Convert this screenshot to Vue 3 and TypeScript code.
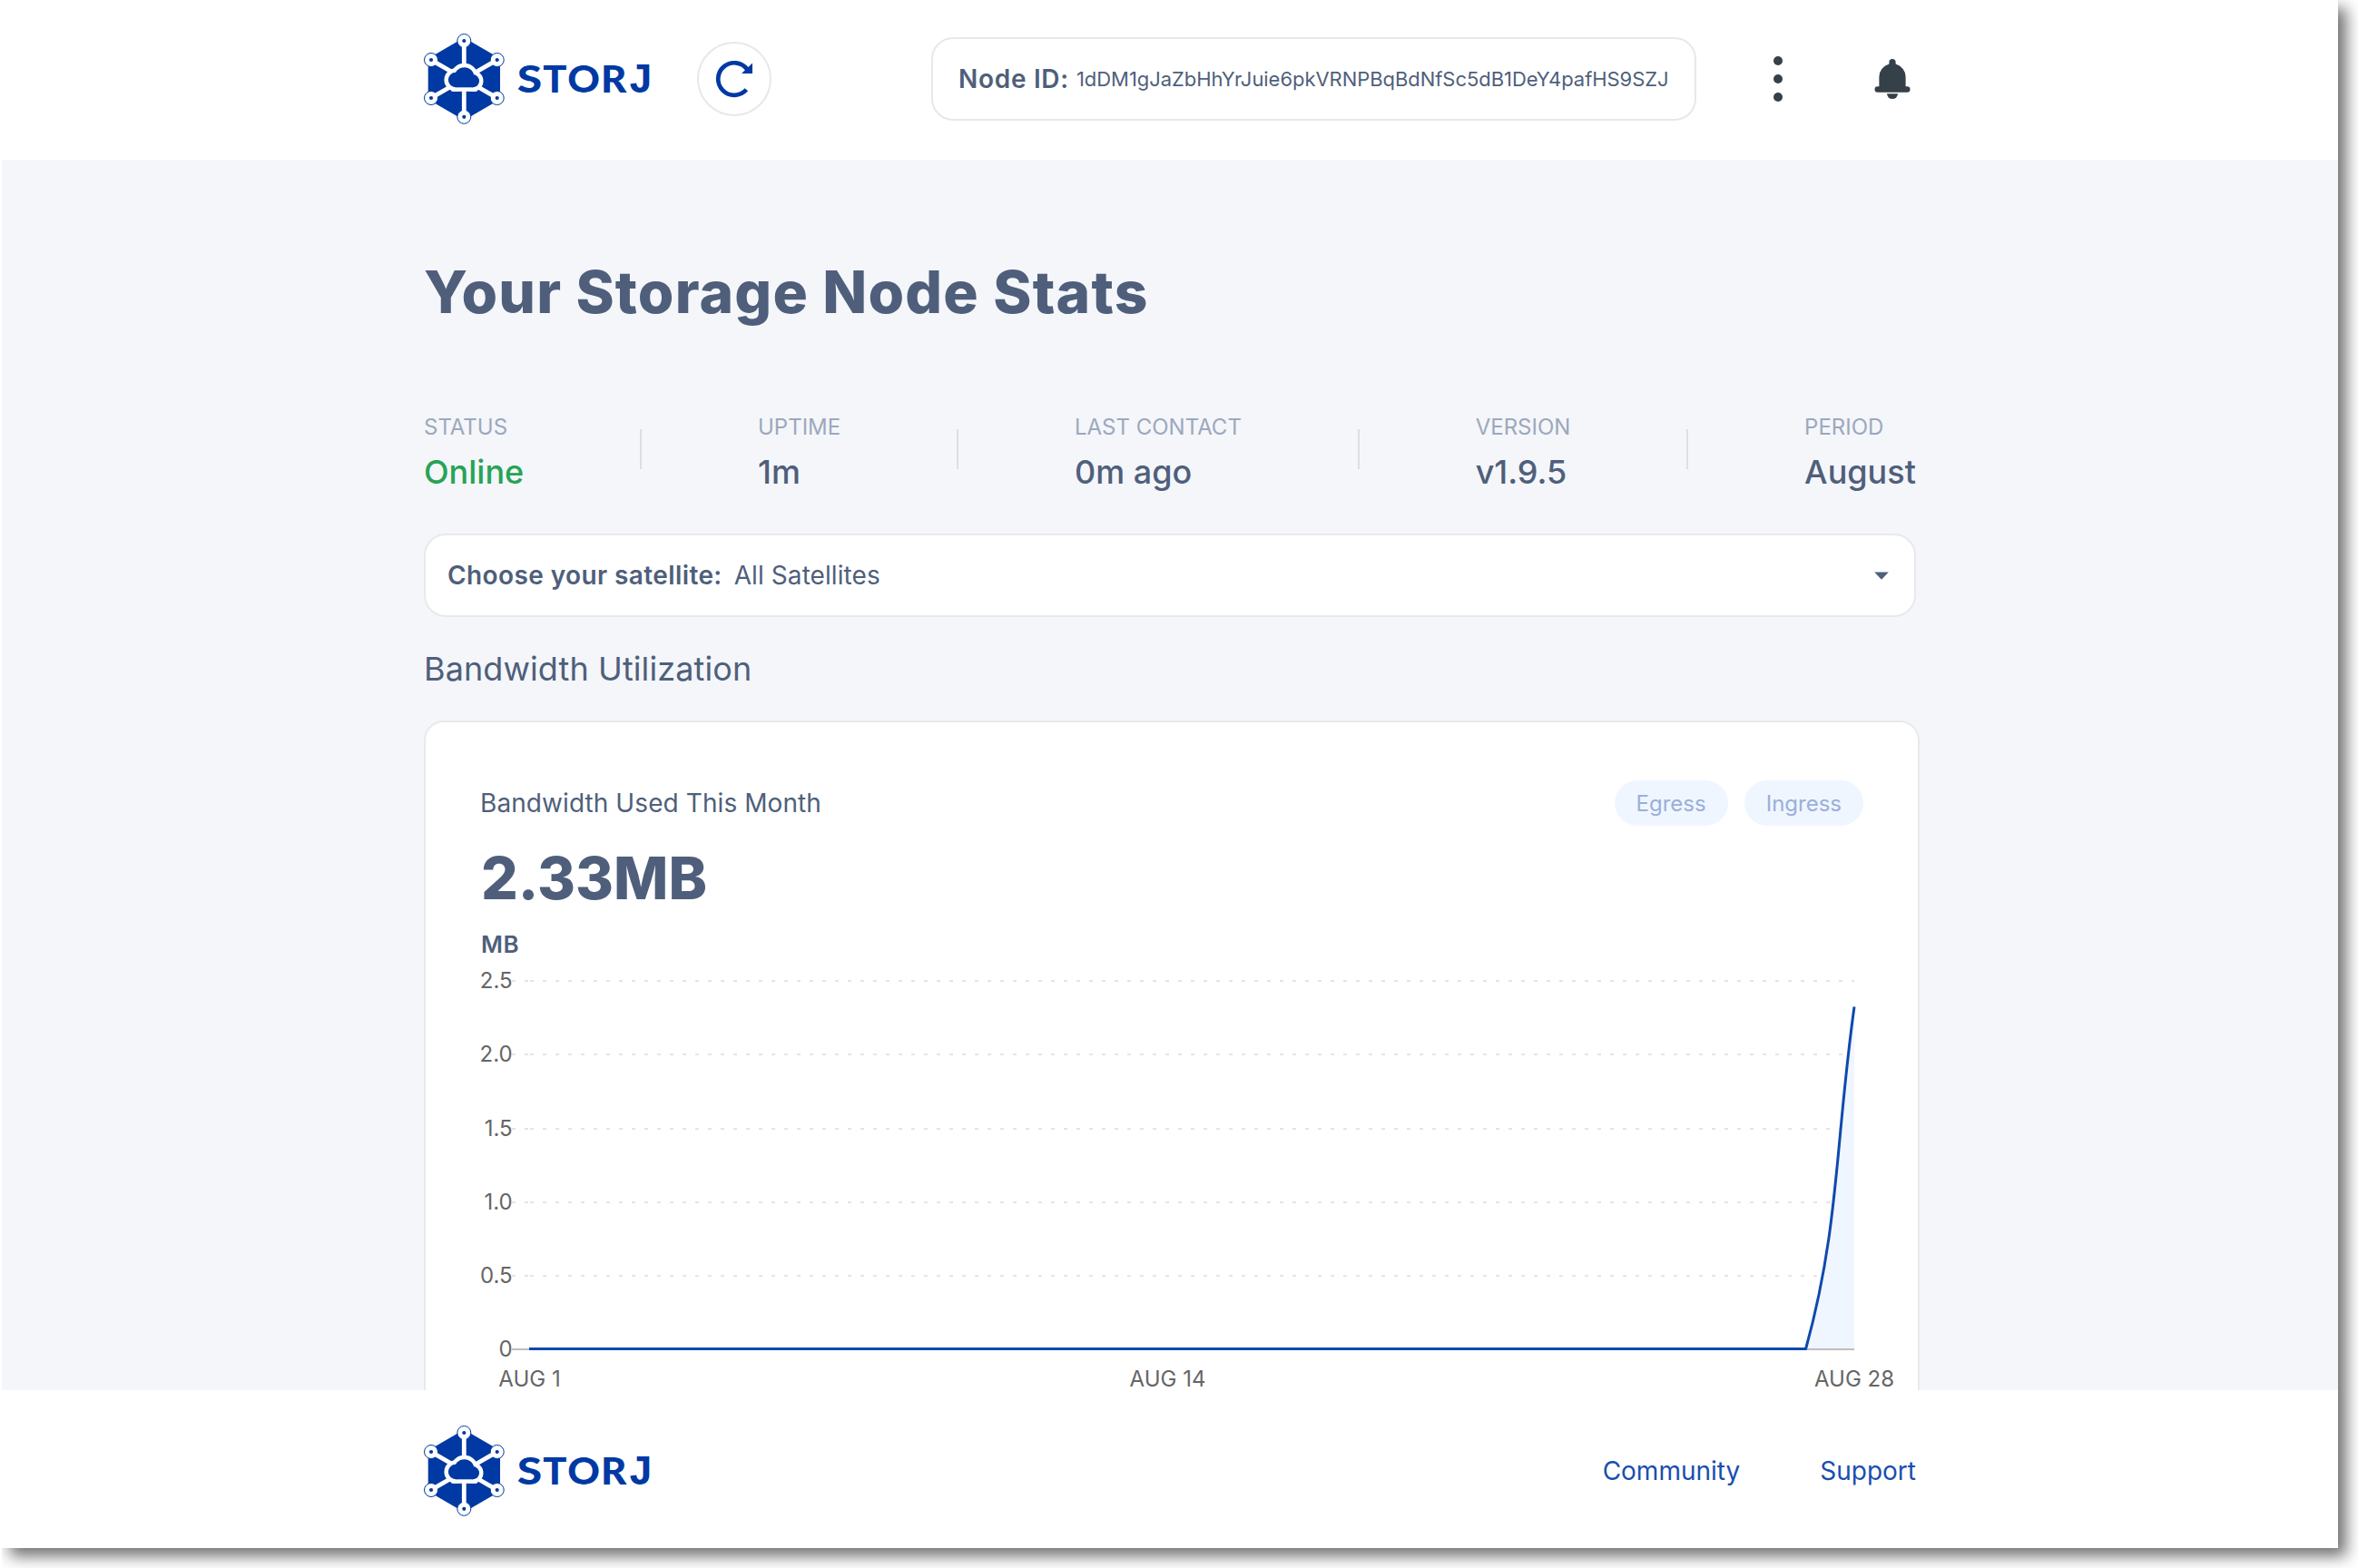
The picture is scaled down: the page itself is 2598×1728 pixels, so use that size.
<script setup lang="ts">
interface Stat { label: string; value: string; online?: boolean }
interface Glyph { char: string; x: number; length: number; family: string; size: number }

const nodeId = '1dDM1gJaZbHhYrJuie6pkVRNPBqBdNfSc5dB1DeY4pafHS9SZJ'

const stats: Stat[] = [
  { label: 'STATUS', value: 'Online', online: true },
  { label: 'UPTIME', value: '1m' },
  { label: 'LAST CONTACT', value: '0m ago' },
  { label: 'VERSION', value: 'v1.9.5' },
  { label: 'PERIOD', value: 'August' },
]

const wordmark: Glyph[] = [
  { char: 'S', x: 102.8, length: 27.4, family: 'Lato', size: 42.5 },
  { char: 'T', x: 131.2, length: 26.2, family: 'Lato', size: 42.5 },
  { char: 'O', x: 158.3, length: 35.7, family: 'Lato', size: 42.5 },
  { char: 'R', x: 195, length: 28.4, family: 'Lato', size: 42.5 },
  { char: 'J', x: 225, length: 28, family: 'Liberation Mono', size: 46.5 },
]

const logoNodes = [
  [44.3, 8], [80.7, 29], [80.7, 71], [44.3, 91.8], [8, 71], [8, 29],
]

const gridLines = [
  { label: '2.5', y: 25 },
  { label: '2.0', y: 106 },
  { label: '1.5', y: 188 },
  { label: '1.0', y: 269 },
  { label: '0.5', y: 350 },
  { label: '0', y: 431 },
]

const dates = [
  { label: 'AUG 1', x: 54.5 },
  { label: 'AUG 14', x: 757.5 },
  { label: 'AUG 28', x: 1514 },
]
</script>

<template>
  <div class="page">
    <svg class="defs" width="0" height="0" aria-hidden="true">
      <symbol id="storj-mark" viewBox="0 0 90 100">
        <path d="M44.3 4.5 84 27.4V72.6L44.3 95.5 4.7 72.6V27.4Z" fill="#0039a3" />
        <g v-for="(n, i) in logoNodes" :key="i">
          <circle :cx="n[0]" :cy="n[1]" r="7.5" fill="#fff" stroke="#0039a3" stroke-width="1" />
          <circle :cx="n[0]" :cy="n[1]" r="2.1" fill="#0039a3" />
        </g>
        <g stroke="#fff" stroke-width="4.8">
          <line x1="44.3" y1="12" x2="44.3" y2="40" />
          <line x1="44.3" y1="88" x2="44.3" y2="60" />
          <line x1="12" y1="31.3" x2="40" y2="47.5" />
          <line x1="76.6" y1="31.3" x2="48.6" y2="47.5" />
          <line x1="12" y1="68.7" x2="40" y2="52.5" />
          <line x1="76.6" y1="68.7" x2="48.6" y2="52.5" />
        </g>
        <g fill="#fff" stroke="#fff" stroke-width="9">
          <circle cx="35.2" cy="51" r="8.3" />
          <circle cx="44.6" cy="48" r="10.8" />
          <circle cx="53.9" cy="52.2" r="7.1" />
          <rect x="35" y="50" width="19" height="9.3" />
        </g>
        <g fill="#0039a3">
          <circle cx="35.2" cy="51" r="8.3" />
          <circle cx="44.6" cy="48" r="10.8" />
          <circle cx="53.9" cy="52.2" r="7.1" />
          <rect x="35" y="50" width="19" height="9.3" />
        </g>
      </symbol>
    </svg>

    <div class="window">
      <header class="header">
        <div class="container header-row">
          <svg class="logo" width="254" height="100" viewBox="0 0 254 100">
            <use href="#storj-mark" width="90" height="100" />
            <text
              v-for="g in wordmark"
              :key="g.char"
              :x="g.x"
              y="65"
              :font-family="`'${g.family}', sans-serif`"
              :font-size="g.size"
              :textLength="g.length"
              lengthAdjust="spacingAndGlyphs"
            >{{ g.char }}</text>
          </svg>
          <button class="refresh" aria-label="Refresh">
            <svg width="48" height="48" viewBox="-24 -24 48 48">
              <path d="M13.4 11.8A17.800 17.800 0 1 1 14.200 -10.700" fill="none" stroke="#0039a3" stroke-width="4.700" />
              <path d="M20 -17.500V-6H8Z" fill="#0039a3" />
            </svg>
          </button>
          <div class="node-id">
            <b>Node ID:</b>
            <span>{{ nodeId }}</span>
          </div>
          <svg class="menu" width="12" height="52" viewBox="0 0 12 52" fill="#354049">
            <circle cx="6" cy="6" r="5" />
            <circle cx="6" cy="26" r="5" />
            <circle cx="6" cy="46" r="5" />
          </svg>
          <svg class="bell" width="40" height="46" viewBox="0 0 40 46" fill="#354049">
            <path d="M20 1a3.6 3.6 0 0 1 3.6 3.6v2A14.6 14.6 0 0 1 34.6 20.6V31.2H36.2a3.2 3.2 0 0 1 0 6.6H3.8a3.2 3.2 0 0 1 0-6.6H5.4V20.6A14.6 14.6 0 0 1 16.4 6.6v-2A3.6 3.6 0 0 1 20 1Z" />
            <path d="M14 39.3H26a6 5.8 0 0 1-12 0Z" />
          </svg>
        </div>
      </header>

      <main class="main">
        <div class="container">
          <h1>Your Storage Node Stats</h1>

          <section class="stats">
            <template v-for="(s, i) in stats" :key="s.label">
              <i v-if="i > 0" class="divider" />
              <div class="stat">
                <p class="stat-label">{{ s.label }}</p>
                <p class="stat-value" :class="{ online: s.online }">{{ s.value }}</p>
              </div>
            </template>
          </section>

          <div class="select">
            <b>Choose your satellite:</b>
            <span>All Satellites</span>
            <svg class="caret" width="16" height="9" viewBox="0 0 16 9">
              <path d="M0.2 0.5H15.8L8 8.8Z" fill="#4f5f7b" />
            </svg>
          </div>

          <h2>Bandwidth Utilization</h2>

          <section class="card">
            <div class="card-head">
              <span>Bandwidth Used This Month</span>
              <div class="filters">
                <button>Egress</button>
                <button>Ingress</button>
              </div>
            </div>
            <p class="total">2.33MB</p>
            <p class="unit">MB</p>
            <svg class="chart" width="1584" height="476" viewBox="0 0 1584 476">
              <template v-for="g in gridLines" :key="g.label">
                <text class="tick" x="35.6" :y="g.y + 8.3" text-anchor="end">{{ g.label }}</text>
                <template v-if="g.label !== '0'">
                  <line class="grid" x1="35" :y1="g.y" x2="54" :y2="g.y" />
                  <line class="grid" x1="55" :y1="g.y" x2="1514" :y2="g.y" />
                </template>
              </template>
              <path
                d="M1460.6 430C1497.5 297 1493 204 1514 53V431H1460Z"
                fill="#f0f6ff"
              />
              <line x1="35" y1="431" x2="1514" y2="431" stroke="#bdbdbd" stroke-width="2" />
              <path
                d="M54 430.5H1460.6C1497.5 297 1493 204 1514 53.5"
                fill="none"
                stroke="#0f49ad"
                stroke-width="3"
                stroke-linejoin="round"
              />
              <text
                v-for="d in dates"
                :key="d.label"
                class="tick"
                :x="d.x"
                y="472"
                text-anchor="middle"
              >{{ d.label }}</text>
            </svg>
          </section>
        </div>
      </main>

      <footer class="footer">
        <div class="container footer-row">
          <svg class="logo" width="254" height="100" viewBox="0 0 254 100">
            <use href="#storj-mark" width="90" height="100" />
            <text
              v-for="g in wordmark"
              :key="g.char"
              :x="g.x"
              y="65"
              :font-family="`'${g.family}', sans-serif`"
              :font-size="g.size"
              :textLength="g.length"
              lengthAdjust="spacingAndGlyphs"
            >{{ g.char }}</text>
          </svg>
          <nav>
            <a>Community</a>
            <a>Support</a>
          </nav>
        </div>
      </footer>
    </div>
  </div>
</template>

<style>
body {
  background: #fff;
}
</style>

<style scoped>
.page {
  box-sizing: border-box;
  width: 2598px;
  height: 1728px;
  padding-left: 2px;
  overflow: hidden;
  background: #fff;
}
.window {
  width: 2574px;
  height: 1706px;
  display: flex;
  flex-direction: column;
  font-family: "Inter", sans-serif;
  color: #4f5f7b;
  background: #fff;
  box-shadow: 9px 9px 16px rgba(0, 0, 0, 0.56);
  clip-path: inset(0 -22px -22px 0);
}
.defs {
  position: absolute;
}
p, h1, h2 {
  margin: 0;
}
button {
  font-family: inherit;
  border: none;
  padding: 0;
}
.container {
  width: 1644px;
  margin: 0 auto 0 465px;
}
.header {
  height: 174px;
  padding-bottom: 2px;
  flex: none;
}
.header-row {
  height: 174px;
  display: flex;
  align-items: center;
}
.logo {
  flex: none;
  overflow: visible;
  fill: #0039a3;
  font-weight: 900;
}
.refresh {
  box-sizing: border-box;
  width: 82px;
  height: 82px;
  margin-left: 47px;
  border: 2px solid #e8e8e8;
  border-radius: 50%;
  background: #fff;
  display: flex;
  align-items: center;
  justify-content: center;
  flex: none;
}
.node-id {
  box-sizing: border-box;
  width: 843px;
  height: 92px;
  margin-left: 176px;
  padding-left: 28px;
  border: 2px solid #e8e8e8;
  border-radius: 24px;
  display: flex;
  align-items: center;
  flex: none;
  white-space: nowrap;
}
.node-id b {
  font-size: 28px;
  font-weight: 600;
  letter-spacing: 0.7px;
  margin-right: 8px;
}
.node-id span {
  font-size: 22px;
  letter-spacing: -0.05px;
}
.menu {
  margin-left: 84px;
  flex: none;
}
.bell {
  margin-left: 100px;
  flex: none;
}
.main {
  height: 1356px;
  flex: none;
  overflow: hidden;
  background: #f4f6fa;
}
h1 {
  padding-top: 107px;
  font-size: 64px;
  line-height: 78px;
  font-weight: 800;
  letter-spacing: 1.2px;
}
.stats {
  margin-top: 94px;
  height: 87px;
  display: flex;
  justify-content: space-between;
}
.stat-label {
  margin-top: 1px;
  font-size: 24px;
  line-height: 30px;
  color: #9ca8bc;
}
.stat-value {
  margin-top: 12px;
  font-size: 36px;
  line-height: 44px;
  font-weight: 500;
}
.online {
  color: #27a355;
}
.divider {
  width: 2px;
  height: 44px;
  margin-top: 18px;
  background: #dcdfe4;
}
.select {
  box-sizing: border-box;
  height: 92px;
  margin-top: 46px;
  padding: 0 28px 0 24px;
  border: 2px solid #e8e9ea;
  border-radius: 24px;
  background: #fff;
  display: flex;
  align-items: center;
  font-size: 28px;
}
.select b {
  font-weight: 600;
  letter-spacing: 0.4px;
  margin-right: 13px;
}
.select span {
  letter-spacing: 0.08px;
}
.caret {
  margin-left: auto;
}
h2 {
  margin: 35px 0;
  font-size: 36px;
  line-height: 44px;
  font-weight: 400;
  letter-spacing: 0.1px;
}
.card {
  box-sizing: border-box;
  width: 1648px;
  height: 820px;
  padding: 64px 60px 0;
  border: 2px solid #e8eaea;
  border-radius: 22px;
  background: #fff;
}
.card-head {
  height: 50px;
  display: flex;
  align-items: center;
  justify-content: space-between;
  font-size: 28px;
  letter-spacing: 0.08px;
}
.filters {
  display: flex;
  gap: 18px;
}
.filters button {
  height: 50px;
  padding: 0 24px;
  border-radius: 25px;
  background: #eff6ff;
  color: #9bafd9;
  font-size: 24px;
  letter-spacing: 0;
}
.total {
  margin: 20px 0 0 1px;
  font-size: 64px;
  line-height: 75px;
  font-weight: 800;
}
.unit {
  margin: 21px 0 0 1px;
  font-size: 26px;
  line-height: 30px;
  font-weight: 600;
  letter-spacing: 0.5px;
}
.chart {
  display: block;
  overflow: visible;
}
.tick {
  font-size: 24px;
  fill: #666;
}
.grid {
  stroke: #e4e4e4;
  stroke-width: 2;
  stroke-dasharray: 4 10;
}
.footer {
  height: 174px;
  flex: none;
}
.footer-row {
  height: 174px;
  padding-top: 4px;
  box-sizing: border-box;
  display: flex;
  align-items: center;
}
nav {
  margin-left: auto;
  display: flex;
  gap: 88px;
  font-size: 28px;
  color: #194eb0;
}
</style>
